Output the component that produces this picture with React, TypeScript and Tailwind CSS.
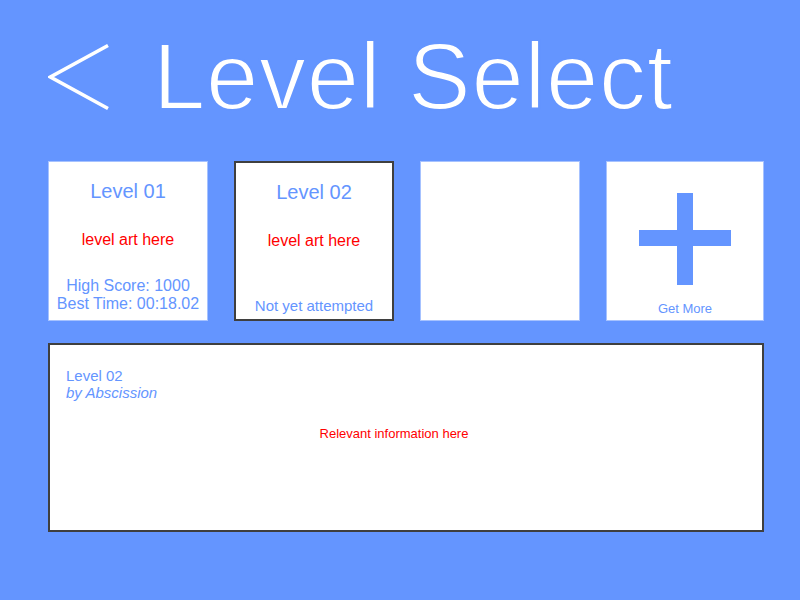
type CardProps = {
  title: string;
  selected?: boolean;
  footer: string[];
};

const LevelCard = ({ title, selected, footer }: CardProps) => {
  return (
    <div
      className={
        selected
          ? 'flex h-[160px] w-[160px] flex-col items-center border-2 border-[#3f3f3f] bg-white pt-[18px]'
          : 'flex h-[160px] w-[160px] flex-col items-center border border-[#a6c2ff] bg-white pt-[18px]'
      }
    >
      <div className="text-[20px] leading-[23px] text-[#6495ff]">{title}</div>
      <div className="mt-[28px] text-[16px] leading-[18px] text-[#ff0000]">level art here</div>
      {footer.length > 1 ? (
        <div className="mt-[28px] text-center text-[16px] leading-[18px] text-[#6495ff]">
          {footer.map((line) => (
            <div key={line}>{line}</div>
          ))}
        </div>
      ) : (
        <div className="mt-[47px] text-[15px] leading-[17px] text-[#6495ff]">{footer[0]}</div>
      )}
    </div>
  );
};

const App = () => {
  return (
    <div className="h-[600px] w-[800px] overflow-hidden bg-[#6495ff] font-['Liberation_Sans',Arial,sans-serif]">
      {/* header */}
      <div className="box-content flex h-[93px] items-center pt-[30px]">
        <svg width="62" height="66" viewBox="0 0 62 66" className="ml-[48px]">
          <polyline points="60,1.5 2.5,33 60,64.5" fill="none" stroke="white" strokeWidth="3.5" />
        </svg>
        <h1 className="ml-[43px] text-[94px] leading-none tracking-[0.7px] text-white [-webkit-text-stroke:2px_#6495ff]">
          Level Select
        </h1>
      </div>

      {/* level cards */}
      <div className="mt-[38px] flex gap-[26px] pl-[48px]">
        <LevelCard title="Level 01" footer={['High Score: 1000', 'Best Time: 00:18.02']} />
        <LevelCard title="Level 02" selected footer={['Not yet attempted']} />
        <div className="h-[160px] w-[160px] border border-[#a6c2ff] bg-white" />
        <div className="flex h-[160px] w-[158px] flex-col items-center border border-[#a6c2ff] bg-white pt-[31px]">
          <svg width="92" height="92" viewBox="0 0 92 92">
            <rect x="38" y="0" width="16" height="92" fill="#6495ff" />
            <rect x="0" y="37" width="92" height="16" fill="#6495ff" />
          </svg>
          <div className="mt-[16px] text-[13px] leading-[15px] text-[#6495ff]">Get More</div>
        </div>
      </div>

      {/* details panel */}
      <div className="ml-[48px] mt-[22px] h-[189px] w-[716px] border-2 border-[#3f3f3f] bg-white pl-[16px] pt-[22px]">
        <div className="text-[15px] leading-[17px] text-[#6495ff]">Level 02</div>
        <div className="text-[15px] italic leading-[17px] text-[#6495ff]">by Abscission</div>
        <div className="mt-[25px] pr-[40px] text-center text-[13px] leading-[15px] text-[#ff0000]">
          Relevant information here
        </div>
      </div>
    </div>
  );
};

export default App;
